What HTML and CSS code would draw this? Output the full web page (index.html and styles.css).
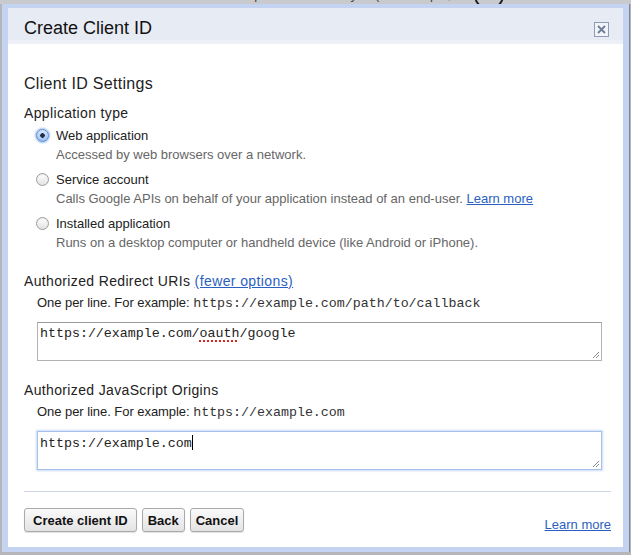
FILE: index.html
```html
<!DOCTYPE html>
<html>
<head>
<meta charset="utf-8">
<link rel="stylesheet" href="styles.css">
</head>
<body>
<div class="backdrop">
  <div class="backdrop-line">
    <span class="backdrop-text">OAuth 2.0 allows users to share specific data with you (for example, contact lists)</span>
    <span class="backdrop-icon"></span>
  </div>
</div>
<div class="dialog">
  <div class="dialog-header">
    <span class="dialog-title">Create Client ID</span>
    <span class="close-box">
      <svg width="13" height="13" viewBox="0 0 13 13"><path d="M3 3 L10 10 M10 3 L3 10" stroke="#6d7d96" stroke-width="1.8" fill="none"/></svg>
    </span>
  </div>
  <div class="dialog-body">
    <h2 class="section-title">Client ID Settings</h2>
    <div class="field-label">Application type</div>
    <div class="options">
      <div class="option">
        <div class="option-row"><span class="radio radio-on"></span><span class="option-title">Web application</span></div>
        <div class="option-desc">Accessed by web browsers over a network.</div>
      </div>
      <div class="option">
        <div class="option-row"><span class="radio"></span><span class="option-title">Service account</span></div>
        <div class="option-desc">Calls Google APIs on behalf of your application instead of an end-user. <a class="link">Learn more</a></div>
      </div>
      <div class="option">
        <div class="option-row"><span class="radio"></span><span class="option-title">Installed application</span></div>
        <div class="option-desc">Runs on a desktop computer or handheld device (like Android or iPhone).</div>
      </div>
    </div>

    <div class="field-label field-gap">Authorized Redirect URIs <a class="link">(fewer options)</a></div>
    <div class="hint">One per line. For example: <span class="mono">https://example.com/path/to/callback</span></div>
    <div class="textarea">https://example.com/<span class="misspelled">oauth</span>/google<svg class="grip" width="8" height="8" viewBox="0 0 8 8"><path d="M7 1 L1 7 M7 4 L4 7" stroke="#8a8a8a" stroke-width="1"/></svg></div>

    <div class="field-label field-gap">Authorized JavaScript Origins</div>
    <div class="hint">One per line. For example: <span class="mono">https://example.com</span></div>
    <div class="textarea textarea-focus">https://example.com<span class="caret"></span><svg class="grip" width="8" height="8" viewBox="0 0 8 8"><path d="M7 1 L1 7 M7 4 L4 7" stroke="#8a8a8a" stroke-width="1"/></svg></div>

    <div class="separator"></div>

    <div class="footer">
      <div class="buttons">
        <button class="btn btn-primary">Create client ID</button>
        <button class="btn">Back</button>
        <button class="btn">Cancel</button>
      </div>
      <a class="link footer-link">Learn more</a>
    </div>
  </div>
</div>
</body>
</html>
```
FILE: styles.css
```css
html, body {
  margin: 0;
  padding: 0;
}
body {
  background: #b5b6b9;
  width: 631px;
  height: 555px;
  overflow: hidden;
  font-family: "Liberation Sans", Arial, sans-serif;
  color: #222;
}
.backdrop {
  height: 4px;
  overflow: hidden;
  background: #c9cacd;
}
.backdrop-line {
  display: flex;
  align-items: center;
  margin-top: -13px;
  height: 16px;
  padding-left: 60px;
}
.backdrop-text {
  font-size: 13px;
  line-height: 16px;
  color: #444;
  white-space: nowrap;
  width: 412px;
  overflow: hidden;
}
.backdrop-icon {
  width: 26px;
  height: 26px;
  border-radius: 50%;
  border: 2px solid #222;
  margin-left: 2px;
}
.dialog {
  margin-left: 2px;
  width: 615px;
  border-style: solid;
  border-color: #c3d3f1;
  border-width: 4px 6px 5px 6px;
  background: #fff;
  box-shadow: 1px 0 0 #7f8799;
}
.dialog-header {
  height: 26px;
  padding: 6px 14px 0 16px;
  background: #e7ebf4;
  border-bottom: 4px solid #edf0f7;
  display: flex;
  align-items: center;
  justify-content: space-between;
}
.dialog-title {
  font-size: 18px;
  color: #111;
  padding-top: 3px;
}
.close-box {
  width: 13px;
  height: 13px;
  border: 1px solid #8d9bb4;
  background: #f2f4f9;
  display: flex;
  margin-top: 4px;
}
.dialog-body {
  padding: 30px 13px 15px 16px;
}
.section-title {
  margin: 0;
  font-size: 16px;
  font-weight: normal;
  line-height: 20px;
  letter-spacing: 0.3px;
  color: #222;
}
.field-label {
  margin-top: 9px;
  font-size: 14px;
  line-height: 20px;
  letter-spacing: 0.35px;
  color: #222;
}
.field-label.field-gap {
  margin-top: 19px;
  line-height: 20px;
}
.field-label .link {
  letter-spacing: 0.4px;
}
.options {
  margin-top: 3px;
  display: flex;
  flex-direction: column;
  gap: 6px;
}
.option-row {
  display: flex;
  align-items: center;
  padding-left: 12px;
  height: 19px;
}
.option-title {
  font-size: 13px;
  color: #222;
  margin-left: 7px;
}
.option-desc {
  font-size: 13px;
  line-height: 19px;
  color: #666;
  padding-left: 32px;
}
.radio {
  width: 11px;
  height: 11px;
  border-radius: 50%;
  border: 1px solid #9c9c9c;
  background: linear-gradient(#ffffff, #e2e2e2);
  box-shadow: inset 0 1px 1px rgba(0,0,0,0.08);
}
.radio-on {
  border-color: #5b88cf;
  background: radial-gradient(circle at 50% 50%, #1e2f4d 0, #1e2f4d 2px, transparent 2.5px), linear-gradient(#d6e6fb, #9ec0ef);
  box-shadow: 0 0 2px 1px #9fc0f0;
}
.link {
  color: #2b5fbf;
  text-decoration: underline;
  cursor: pointer;
}
.hint {
  margin-top: 2px;
  padding-left: 13px;
  font-size: 13px;
  line-height: 19px;
  letter-spacing: -0.05px;
  color: #222;
}
.mono {
  font-family: "Liberation Mono", "Courier New", monospace;
  font-size: 13.3px;
  letter-spacing: 0;
  color: #333;
}
.textarea {
  position: relative;
  margin: 9px 8px 0 13px;
  height: 34px;
  border: 1px solid #b3b3b3;
  border-top-color: #9a9a9a;
  padding: 3px 2px 0 2px;
  font-family: "Liberation Mono", "Courier New", monospace;
  font-size: 13.3px;
  line-height: 16px;
  color: #222;
}
.textarea-focus {
  border-color: #a6c0ea;
  box-shadow: 0 0 2px 1px #c9daf6;
}
.misspelled {
  text-decoration: underline dotted #dd2222;
  text-decoration-thickness: 2px;
  text-underline-offset: 3px;
}
.caret {
  display: inline-block;
  width: 1px;
  height: 15px;
  background: #000;
  vertical-align: -3px;
}
.grip {
  position: absolute;
  right: 1px;
  bottom: 1px;
}
.separator {
  margin-top: 21px;
  height: 1px;
  background: #cdd6e6;
  margin-right: -1px;
}
.footer {
  margin-top: 16px;
  display: flex;
  justify-content: space-between;
  align-items: flex-end;
  margin-right: -1px;
}
.buttons {
  display: flex;
  gap: 5px;
}
.btn {
  height: 24px;
  padding: 0 5px;
  font-family: "Liberation Sans", Arial, sans-serif;
  font-weight: bold;
  font-size: 13px;
  color: #111;
  background: linear-gradient(#fafafa, #e3e3e3);
  border: 1px solid #a9a9a9;
  border-radius: 3px;
  box-shadow: 0 1px 1px rgba(0,0,0,0.12);
}
.btn-primary {
  padding: 0 8px;
}
.footer-link {
  font-size: 13px;
  line-height: 19px;
  margin-bottom: -2px;
}
```
